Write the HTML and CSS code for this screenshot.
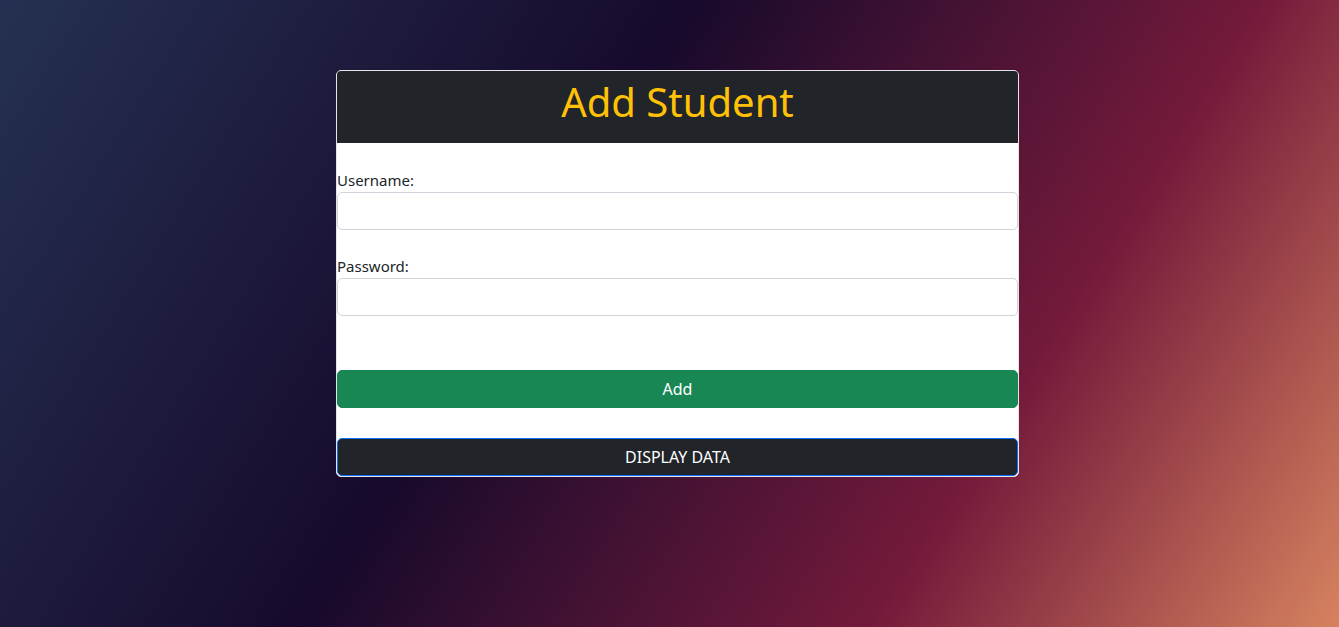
FILE: index.html
```html
<!DOCTYPE html>
<html lang="en">
<head>
<meta charset="utf-8">
<title>Add Student</title>
<link rel="stylesheet" href="styles.css">
</head>
<body>
<main class="page">
  <section class="card">
    <header class="card-header">
      <h1 class="title">Add Student</h1>
    </header>
    <form class="card-body">
      <div class="field">
        <label class="label" for="username">Username:</label>
        <input class="input" id="username" type="text">
      </div>
      <div class="field">
        <label class="label" for="password">Password:</label>
        <input class="input" id="password" type="password">
      </div>
      <button class="btn btn-add" type="button">Add</button>
      <button class="btn btn-display" type="button">DISPLAY DATA</button>
    </form>
  </section>
</main>
</body>
</html>
```

FILE: styles.css
```css
* { box-sizing: border-box; }

html, body {
  margin: 0;
  height: 100%;
}

body {
  font-family: "Noto Sans", "Open Sans", sans-serif;
  color: #212529;
  background: linear-gradient(122deg, #253152 0%, #170a2c 40%, #741a3b 73%, #d6825f 100%);
  overflow: hidden;
}

.page {
  display: flex;
  justify-content: center;
  padding: 70px 0 0 16px;
}

.card {
  width: 683px;
  background: #fff;
  border: 1px solid #e6e3ea;
  border-radius: 5px;
  overflow: hidden;
  display: flex;
  flex-direction: column;
}

.card-header {
  background: #212529;
  padding: 8px 16px;
  height: 72px;
  text-align: center;
}

.title {
  margin: 0;
  font-size: 40px;
  line-height: 46px;
  font-weight: 400;
  color: #ffc107;
}

.card-body {
  display: flex;
  flex-direction: column;
  padding-top: 25px;
  margin: 0;
}

.field {
  display: flex;
  flex-direction: column;
  margin-bottom: 24px;
}

.field + .field {
  margin-bottom: 54px;
}

.label {
  font-size: 15px;
  line-height: 24px;
  color: #212529;
}

.input {
  height: 38px;
  width: 100%;
  border: 1px solid #ced4da;
  border-radius: 5px;
  background: #fff;
  font: inherit;
  padding: 6px 12px;
}

.btn {
  height: 38px;
  width: 100%;
  border-radius: 5px;
  font-family: inherit;
  font-size: 16px;
  color: #fff;
  cursor: pointer;
  padding: 0;
}

.btn-add {
  background: #198754;
  border: 1px solid #198754;
  margin-bottom: 30px;
}

.btn-display {
  background: #212529;
  border: 1px solid #0d6efd;
}
```
